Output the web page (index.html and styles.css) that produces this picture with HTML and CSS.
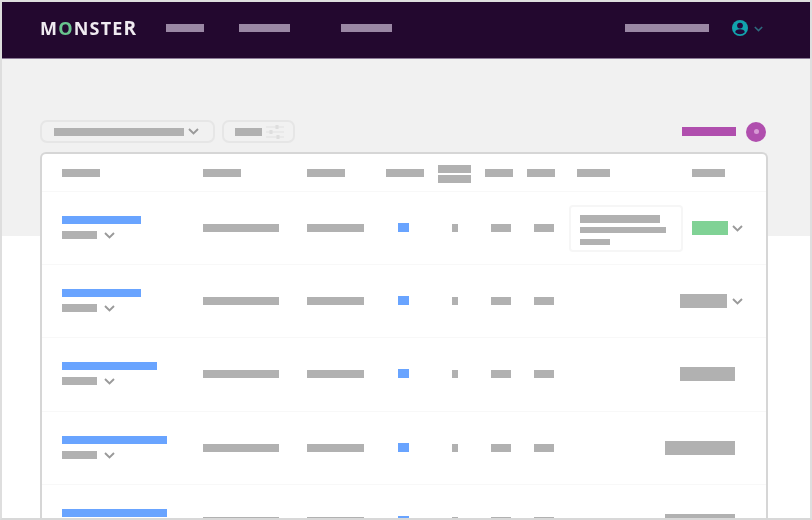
FILE: index.html
```html
<!DOCTYPE html>
<html lang="en">
<head>
<meta charset="utf-8">
<title>Monster</title>
<link rel="stylesheet" href="styles.css">
</head>
<body>
<div class="frame">
  <header class="topbar">
    <div class="logo">M<span class="logo-o">O</span>NSTE<span class="logo-r">R</span></div>
    <nav class="nav">
      <span class="bar nav-bar w38"></span>
      <span class="bar nav-bar w51"></span>
      <span class="bar nav-bar w51 nav-gap"></span>
    </nav>
    <div class="account">
      <span class="bar nav-bar w84"></span>
      <svg class="user" viewBox="0 0 16 16"><circle cx="8" cy="8" r="8" fill="#12a3ad"/><circle cx="8" cy="5.6" r="2.9" fill="#22083a"/><path d="M3.2 12.2c0-2 2-3 4.8-3s4.8 1 4.8 3c-1.2 1.3-2.9 2-4.8 2s-3.6-.7-4.8-2z" fill="#22083a"/></svg>
      <svg class="chev chev-nav" viewBox="0 0 11 7"><path d="M1 1l4.5 4.5L10 1"/></svg>
    </div>
  </header>
  <main class="main">
    <div class="toolbar">
      <div class="pill pill-select">
        <span class="bar h8 w130"></span>
        <svg class="chev" viewBox="0 0 11 7"><path d="M1 1l4.5 4.5L10 1"/></svg>
      </div>
      <div class="pill pill-filter">
        <span class="bar h8 w27"></span>
        <svg class="sliders" viewBox="0 0 18 16"><path d="M0 3h18M0 8h18M0 13h18"/><path class="knob" d="M11 1v4M5 6v4M12 11v4"/></svg>
      </div>
      <div class="add">
        <span class="add-bar"></span>
        <span class="add-btn"><span class="add-dot"></span></span>
      </div>
    </div>
    <section class="table">
      <div class="row head">
        <span class="bar h8 w38"></span>
        <span class="bar h8 w38"></span>
        <span class="bar h8 w38"></span>
        <span class="bar h8 w38"></span>
        <span class="stack"><span class="bar h8 w33"></span><span class="bar h8 w33"></span></span>
        <span class="bar h8 w28"></span>
        <span class="bar h8 w28"></span>
        <span class="bar h8 w33 ml8"></span>
        <span class="bar h8 w33 ml27"></span>
      </div>

      <div class="row">
        <div class="title"><span class="bar link w79"></span><span class="sub"><span class="bar h8 w35"></span><svg class="chev" viewBox="0 0 11 7"><path d="M1 1l4.5 4.5L10 1"/></svg></span></div>
        <span class="bar h8 w76"></span>
        <span class="bar h8 w57"></span>
        <span class="sq"></span>
        <span class="bar h8 tick"></span>
        <span class="bar h8 w20 ml6"></span>
        <span class="bar h8 w20 ml7"></span>
        <div class="note"><span class="bar n1"></span><span class="bar n2"></span><span class="bar n3"></span></div>
        <div class="status"><span class="badge green w36"></span><svg class="chev" viewBox="0 0 11 7"><path d="M1 1l4.5 4.5L10 1"/></svg></div>
      </div>

      <div class="row">
        <div class="title"><span class="bar link w79"></span><span class="sub"><span class="bar h8 w35"></span><svg class="chev" viewBox="0 0 11 7"><path d="M1 1l4.5 4.5L10 1"/></svg></span></div>
        <span class="bar h8 w76"></span>
        <span class="bar h8 w57"></span>
        <span class="sq"></span>
        <span class="bar h8 tick"></span>
        <span class="bar h8 w20 ml6"></span>
        <span class="bar h8 w20 ml7"></span>
        <span></span>
        <div class="status"><span class="badge w47 mr1"></span><svg class="chev" viewBox="0 0 11 7"><path d="M1 1l4.5 4.5L10 1"/></svg></div>
      </div>

      <div class="row">
        <div class="title"><span class="bar link w95"></span><span class="sub"><span class="bar h8 w35"></span><svg class="chev" viewBox="0 0 11 7"><path d="M1 1l4.5 4.5L10 1"/></svg></span></div>
        <span class="bar h8 w76"></span>
        <span class="bar h8 w57"></span>
        <span class="sq"></span>
        <span class="bar h8 tick"></span>
        <span class="bar h8 w20 ml6"></span>
        <span class="bar h8 w20 ml7"></span>
        <span></span>
        <div class="status plain"><span class="badge w55"></span></div>
      </div>

      <div class="row">
        <div class="title"><span class="bar link w105"></span><span class="sub"><span class="bar h8 w35"></span><svg class="chev" viewBox="0 0 11 7"><path d="M1 1l4.5 4.5L10 1"/></svg></span></div>
        <span class="bar h8 w76"></span>
        <span class="bar h8 w57"></span>
        <span class="sq"></span>
        <span class="bar h8 tick"></span>
        <span class="bar h8 w20 ml6"></span>
        <span class="bar h8 w20 ml7"></span>
        <span></span>
        <div class="status plain"><span class="badge w70"></span></div>
      </div>

      <div class="row">
        <div class="title"><span class="bar link w105"></span><span class="sub"><span class="bar h8 w35"></span><svg class="chev" viewBox="0 0 11 7"><path d="M1 1l4.5 4.5L10 1"/></svg></span></div>
        <span class="bar h8 w76"></span>
        <span class="bar h8 w57"></span>
        <span class="sq"></span>
        <span class="bar h8 tick"></span>
        <span class="bar h8 w20 ml6"></span>
        <span class="bar h8 w20 ml7"></span>
        <span></span>
        <div class="status plain"><span class="badge w70"></span></div>
      </div>
    </section>
  </main>
</div>
</body>
</html>
```

FILE: styles.css
```css
* { box-sizing: border-box; }

html, body { margin: 0; padding: 0; background: #fff; }

.frame {
  width: 812px;
  height: 520px;
  border: 2px solid #dedede;
  border-bottom-color: #d8d8d8;
  overflow: hidden;
  background: #fff;
  filter: blur(0.45px);
}

/* placeholder bars */
.bar { display: block; flex: none; background: #b1b1b1; }
.h8 { height: 8px; }
.w20 { width: 20px; }
.w27 { width: 27px; }
.w28 { width: 28px; }
.w33 { width: 33px; }
.w35 { width: 35px; }
.w36 { width: 36px; }
.w38 { width: 38px; }
.w47 { width: 47px; }
.w51 { width: 51px; }
.w55 { width: 55px; }
.w57 { width: 57px; }
.w70 { width: 70px; }
.w76 { width: 76px; }
.w79 { width: 79px; }
.w84 { width: 84px; }
.w95 { width: 95px; }
.w105 { width: 105px; }
.w130 { width: 130px; }
.ml6 { margin-left: 6px; }
.ml7 { margin-left: 7px; }
.ml8 { margin-left: 8px; }
.ml27 { margin-left: 27px; }
.mr1 { margin-right: 1px; }

.chev { display: block; flex: none; width: 11px; height: 7px; fill: none; stroke: #9a9a9a; stroke-width: 1.9; }

/* top bar */
.topbar {
  display: flex;
  align-items: center;
  height: 57px;
  padding: 0 47px 4px 38px;
  background: #23082f;
  border-bottom: 1px solid #8d7c98;
}
.logo {
  width: 126px;
  font-family: "Open Sans", sans-serif;
  font-weight: 700;
  font-size: 18px;
  line-height: 1;
  letter-spacing: 1.2px;
  color: #efeaf0;
}
.logo-o { color: #69c48f; }
.logo-r { font-size: 19px; }
.nav { display: flex; gap: 35px; }
.nav-bar { height: 8px; background: #9a87a4; }
.nav-gap { margin-left: 16px; }
.account { display: flex; align-items: center; margin-left: auto; }
.user { width: 16px; height: 16px; margin-left: 23px; }
.chev-nav { width: 9px; height: 6px; margin-left: 6px; margin-top: 1px; stroke: #2d6a7e; }

/* main */
.main {
  height: 459px;
  padding: 61px 42px 0 38px;
  background: linear-gradient(#f1f1f1 0 177px, #fff 177px);
}
.toolbar { display: flex; align-items: center; height: 23px; }
.pill {
  display: flex;
  align-items: center;
  height: 23px;
  border: 2px solid #e6e6e6;
  border-radius: 7px;
}
.pill-select { width: 175px; padding-left: 12px; gap: 4px; }
.pill-filter { width: 73px; margin-left: 7px; padding-left: 11px; gap: 4px; }
.sliders { width: 18px; height: 16px; fill: none; stroke: #e6e6e6; stroke-width: 1.5; }
.sliders .knob { stroke: #dedede; stroke-width: 3; }
.add { display: flex; align-items: center; gap: 10px; margin-left: auto; margin-right: 2px; }
.add-bar { width: 54px; height: 9px; background: #b04fae; }
.add-btn {
  display: flex;
  align-items: center;
  justify-content: center;
  width: 20px;
  height: 20px;
  border-radius: 50%;
  background: #b04fae;
}
.add-dot { width: 5px; height: 5px; border-radius: 50%; background: #d79ad5; }

/* table */
.table {
  width: 728px;
  margin-top: 9px;
  background: #fff;
  border: 2px solid #d6d6d6;
  border-bottom: 0;
  border-radius: 6px 6px 0 0;
}
.row {
  display: grid;
  grid-template-columns: 141px 104px 79px 52px 47px 42px 42px 96px 1fr;
  align-items: center;
  height: 73.18px;
  padding-left: 20px;
  border-bottom: 1px solid #f8f8f8;
}
.head { height: 38px; }
.stack { display: flex; flex-direction: column; gap: 2px; margin-top: 2px; }
.title { display: flex; flex-direction: column; gap: 7px; margin-bottom: 1px; }
.link { height: 8px; background: #69a4ff; }
.sub { display: flex; align-items: flex-end; gap: 7px; }
.sq { width: 11px; height: 9px; margin-left: 12px; margin-bottom: 1px; background: #69a4ff; }
.tick { width: 6px; margin-left: 14px; }
.note {
  display: flex;
  flex-direction: column;
  gap: 4px;
  width: 114px;
  height: 47px;
  padding: 8px 9px 0;
  border: 2px solid #f6f6f6;
  border-radius: 4px;
}
.n1 { width: 80px; height: 8px; }
.n2 { width: 86px; height: 6px; }
.n3 { width: 30px; height: 6px; margin-top: 2px; }
.status { display: flex; align-items: center; justify-content: flex-end; gap: 4px; padding-right: 23px; }
.status.plain { padding-right: 31px; }
.badge { display: block; height: 14px; background: #b1b1b1; }
.green { background: #80d295; }
```
